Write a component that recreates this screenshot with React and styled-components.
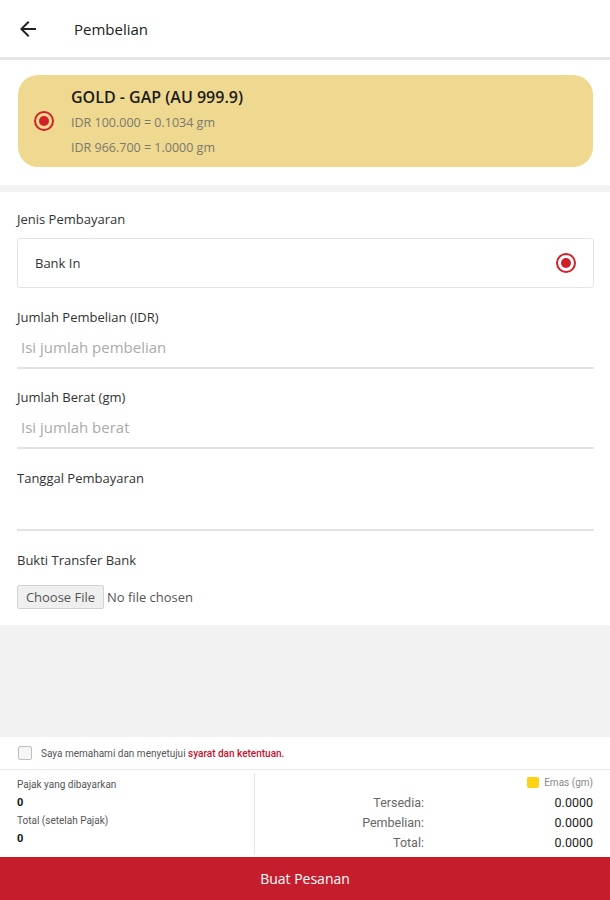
import React from "react";
import styled, { createGlobalStyle } from "styled-components";

const GlobalStyle = createGlobalStyle`
  * { box-sizing: border-box; }
  body {
    margin: 0;
    background: #fff;
    font-family: "Open Sans", "Noto Sans", sans-serif;
    color: #222;
  }
`;

const Page = styled.div`
  width: 610px;
  height: 900px;
  display: flex;
  flex-direction: column;
  background: #f2f2f2;
  overflow: hidden;
`;

const Header = styled.header`
  height: 60px;
  flex-shrink: 0;
  display: flex;
  align-items: center;
  padding: 1px 0 0 16px;
  background: #fff;
  border-bottom: 3px solid #e6e6e6;
`;

const BackButton = styled.button`
  border: none;
  background: none;
  padding: 0;
  width: 24px;
  height: 24px;
  display: flex;
  align-items: center;
  justify-content: center;
  color: #222;
  cursor: pointer;
`;

const Title = styled.h1`
  margin: 0 0 0 34px;
  font-size: 15px;
  font-weight: 400;
  color: #222;
`;

const CardSection = styled.section`
  background: #fff;
  padding: 15px 17px 18px 18px;
  margin-bottom: 7px;
`;

const ProductCard = styled.div`
  height: 92px;
  border-radius: 20px;
  background: #efd890;
  display: flex;
  align-items: center;
  padding-left: 16px;
  gap: 17px;
`;

const ProductInfo = styled.div`
  align-self: flex-start;
  padding-top: 11px;
`;

const Radio = styled.span`
  width: 20px;
  height: 20px;
  flex-shrink: 0;
  border-radius: 50%;
  border: 2px solid #d0202a;
  display: flex;
  align-items: center;
  justify-content: center;
  &::after {
    content: "";
    width: 10px;
    height: 10px;
    border-radius: 50%;
    background: #d0202a;
  }
`;

const ProductName = styled.div`
  font-size: 16px;
  font-weight: 600;
  line-height: 22px;
  margin-bottom: 1.5px;
  color: #1c1c1c;
`;

const Rate = styled.div`
  font-size: 12.5px;
  line-height: 25px;
  color: #7a7a6e;
`;

const Form = styled.section`
  background: #fff;
  padding: 18px 16px 16px 17px;
  display: flex;
  flex-direction: column;
`;

const Label = styled.label`
  display: block;
  font-size: 13px;
  line-height: 18px;
  color: #333;
  margin-top: ${(p) => p.$top || 0}px;
  margin-bottom: ${(p) => p.$bottom || 0}px;
`;

const OptionBox = styled.div`
  height: 50px;
  border: 1px solid #e4e4e4;
  border-radius: 3px;
  display: flex;
  align-items: center;
  justify-content: space-between;
  padding: 0 17px 0 17px;
  font-size: 13px;
  color: #333;
`;

const TextInput = styled.input`
  display: block;
  width: 100%;
  height: ${(p) => p.$h || 43}px;
  border: none;
  border-bottom: 2px solid #e3e3e3;
  padding: 0 4px;
  font-family: inherit;
  font-size: 15px;
  color: #333;
  outline: none;
  background: transparent;
  &::placeholder {
    color: #aaa;
  }
`;

const FileRow = styled.div`
  margin-top: 16px;
  display: flex;
  align-items: center;
  gap: 3px;
  font-size: 13px;
  color: #555;
`;

const FileButton = styled.button`
  height: 24px;
  width: 87px;
  border: 1px solid #d2d2d2;
  border-radius: 2px;
  background: #efefef;
  font-family: inherit;
  font-size: 13px;
  color: #555;
  padding: 0;
`;

const Filler = styled.div`
  flex: 1;
`;

const AgreeRow = styled.div`
  height: 33px;
  flex-shrink: 0;
  background: #fff;
  border-bottom: 1px solid #e8e8e8;
  display: flex;
  align-items: center;
  padding-left: 18px;
  gap: 9px;
  font-family: Roboto, "Noto Sans", sans-serif;
  font-size: 10px;
  color: #555;
`;

const CheckBox = styled.span`
  width: 14px;
  height: 14px;
  border: 1px solid #bdbdbd;
  border-radius: 2px;
  background: #f6f6f6;
`;

const TermsLink = styled.a`
  color: #c8102e;
  font-weight: 500;
  text-decoration: none;
`;

const Summary = styled.div`
  height: 87px;
  flex-shrink: 0;
  background: #fff;
  display: grid;
  grid-template-columns: 255px 1fr;
  font-family: Roboto, "Noto Sans", sans-serif;
`;

const TaxColumn = styled.div`
  border-right: 1px solid #e6e6e6;
  margin: 3px 0 2px;
  padding: 3px 0 0 17px;
  font-size: 10px;
  line-height: 18px;
  color: #555;
`;

const TaxValue = styled.div`
  font-size: 11px;
  font-weight: 700;
  color: #111;
`;

const GoldColumn = styled.div`
  padding: 5px 17px 0 0;
`;

const Legend = styled.div`
  display: flex;
  justify-content: flex-end;
  align-items: center;
  gap: 5px;
  height: 14px;
  margin-bottom: 4px;
  font-size: 10px;
  color: #888;
`;

const Swatch = styled.span`
  width: 12px;
  height: 11px;
  border-radius: 2px;
  background: ${(p) => p.$color};
`;

const GoldGrid = styled.div`
  display: grid;
  grid-template-columns: 1fr 169px;
  text-align: right;
  font-size: 12.5px;
  line-height: 20px;
`;

const GoldLabel = styled.span`
  color: #666;
`;

const GoldValue = styled.span`
  color: #222;
`;

const SubmitButton = styled.button`
  height: 43px;
  flex-shrink: 0;
  border: none;
  background: #c41e2d;
  color: #fff;
  font-family: "Open Sans", sans-serif;
  font-size: 14px;
  cursor: pointer;
`;

const ArrowBack = () => (
  <svg width="24" height="24" viewBox="0 0 24 24" fill="currentColor">
    <path d="M20 11H7.83l5.59-5.59L12 4l-8 8 8 8 1.41-1.41L7.83 13H20v-2z" />
  </svg>
);

const goldRows = [
  ["Tersedia:", "0.0000"],
  ["Pembelian:", "0.0000"],
  ["Total:", "0.0000"],
];

export default function App() {
  return (
    <Page>
      <GlobalStyle />
      <Header>
        <BackButton aria-label="back">
          <ArrowBack />
        </BackButton>
        <Title>Pembelian</Title>
      </Header>

      <CardSection>
        <ProductCard>
          <Radio />
          <ProductInfo>
            <ProductName>GOLD - GAP (AU 999.9)</ProductName>
            <Rate>IDR 100.000 = 0.1034 gm</Rate>
            <Rate>IDR 966.700 = 1.0000 gm</Rate>
          </ProductInfo>
        </ProductCard>
      </CardSection>

      <Form>
        <Label $bottom={10}>Jenis Pembayaran</Label>
        <OptionBox>
          <span>Bank In</span>
          <Radio />
        </OptionBox>

        <Label $top={20}>Jumlah Pembelian (IDR)</Label>
        <TextInput placeholder="Isi jumlah pembelian" />

        <Label $top={19}>Jumlah Berat (gm)</Label>
        <TextInput placeholder="Isi jumlah berat" />

        <Label $top={20}>Tanggal Pembayaran</Label>
        <TextInput $h={44} />

        <Label $top={20}>Bukti Transfer Bank</Label>
        <FileRow>
          <FileButton>Choose File</FileButton>
          <span>No file chosen</span>
        </FileRow>
      </Form>

      <Filler />

      <AgreeRow>
        <CheckBox />
        <span>
          Saya memahami dan menyetujui{" "}
          <TermsLink href="#">syarat dan ketentuan.</TermsLink>
        </span>
      </AgreeRow>

      <Summary>
        <TaxColumn>
          <div>Pajak yang dibayarkan</div>
          <TaxValue>0</TaxValue>
          <div>Total (setelah Pajak)</div>
          <TaxValue>0</TaxValue>
        </TaxColumn>
        <GoldColumn>
          <Legend>
            <Swatch $color="#fcd116" />
            Emas (gm)
          </Legend>
          <GoldGrid>
            {goldRows.map(([label, value]) => (
              <React.Fragment key={label}>
                <GoldLabel>{label}</GoldLabel>
                <GoldValue>{value}</GoldValue>
              </React.Fragment>
            ))}
          </GoldGrid>
        </GoldColumn>
      </Summary>

      <SubmitButton>Buat Pesanan</SubmitButton>
    </Page>
  );
}
